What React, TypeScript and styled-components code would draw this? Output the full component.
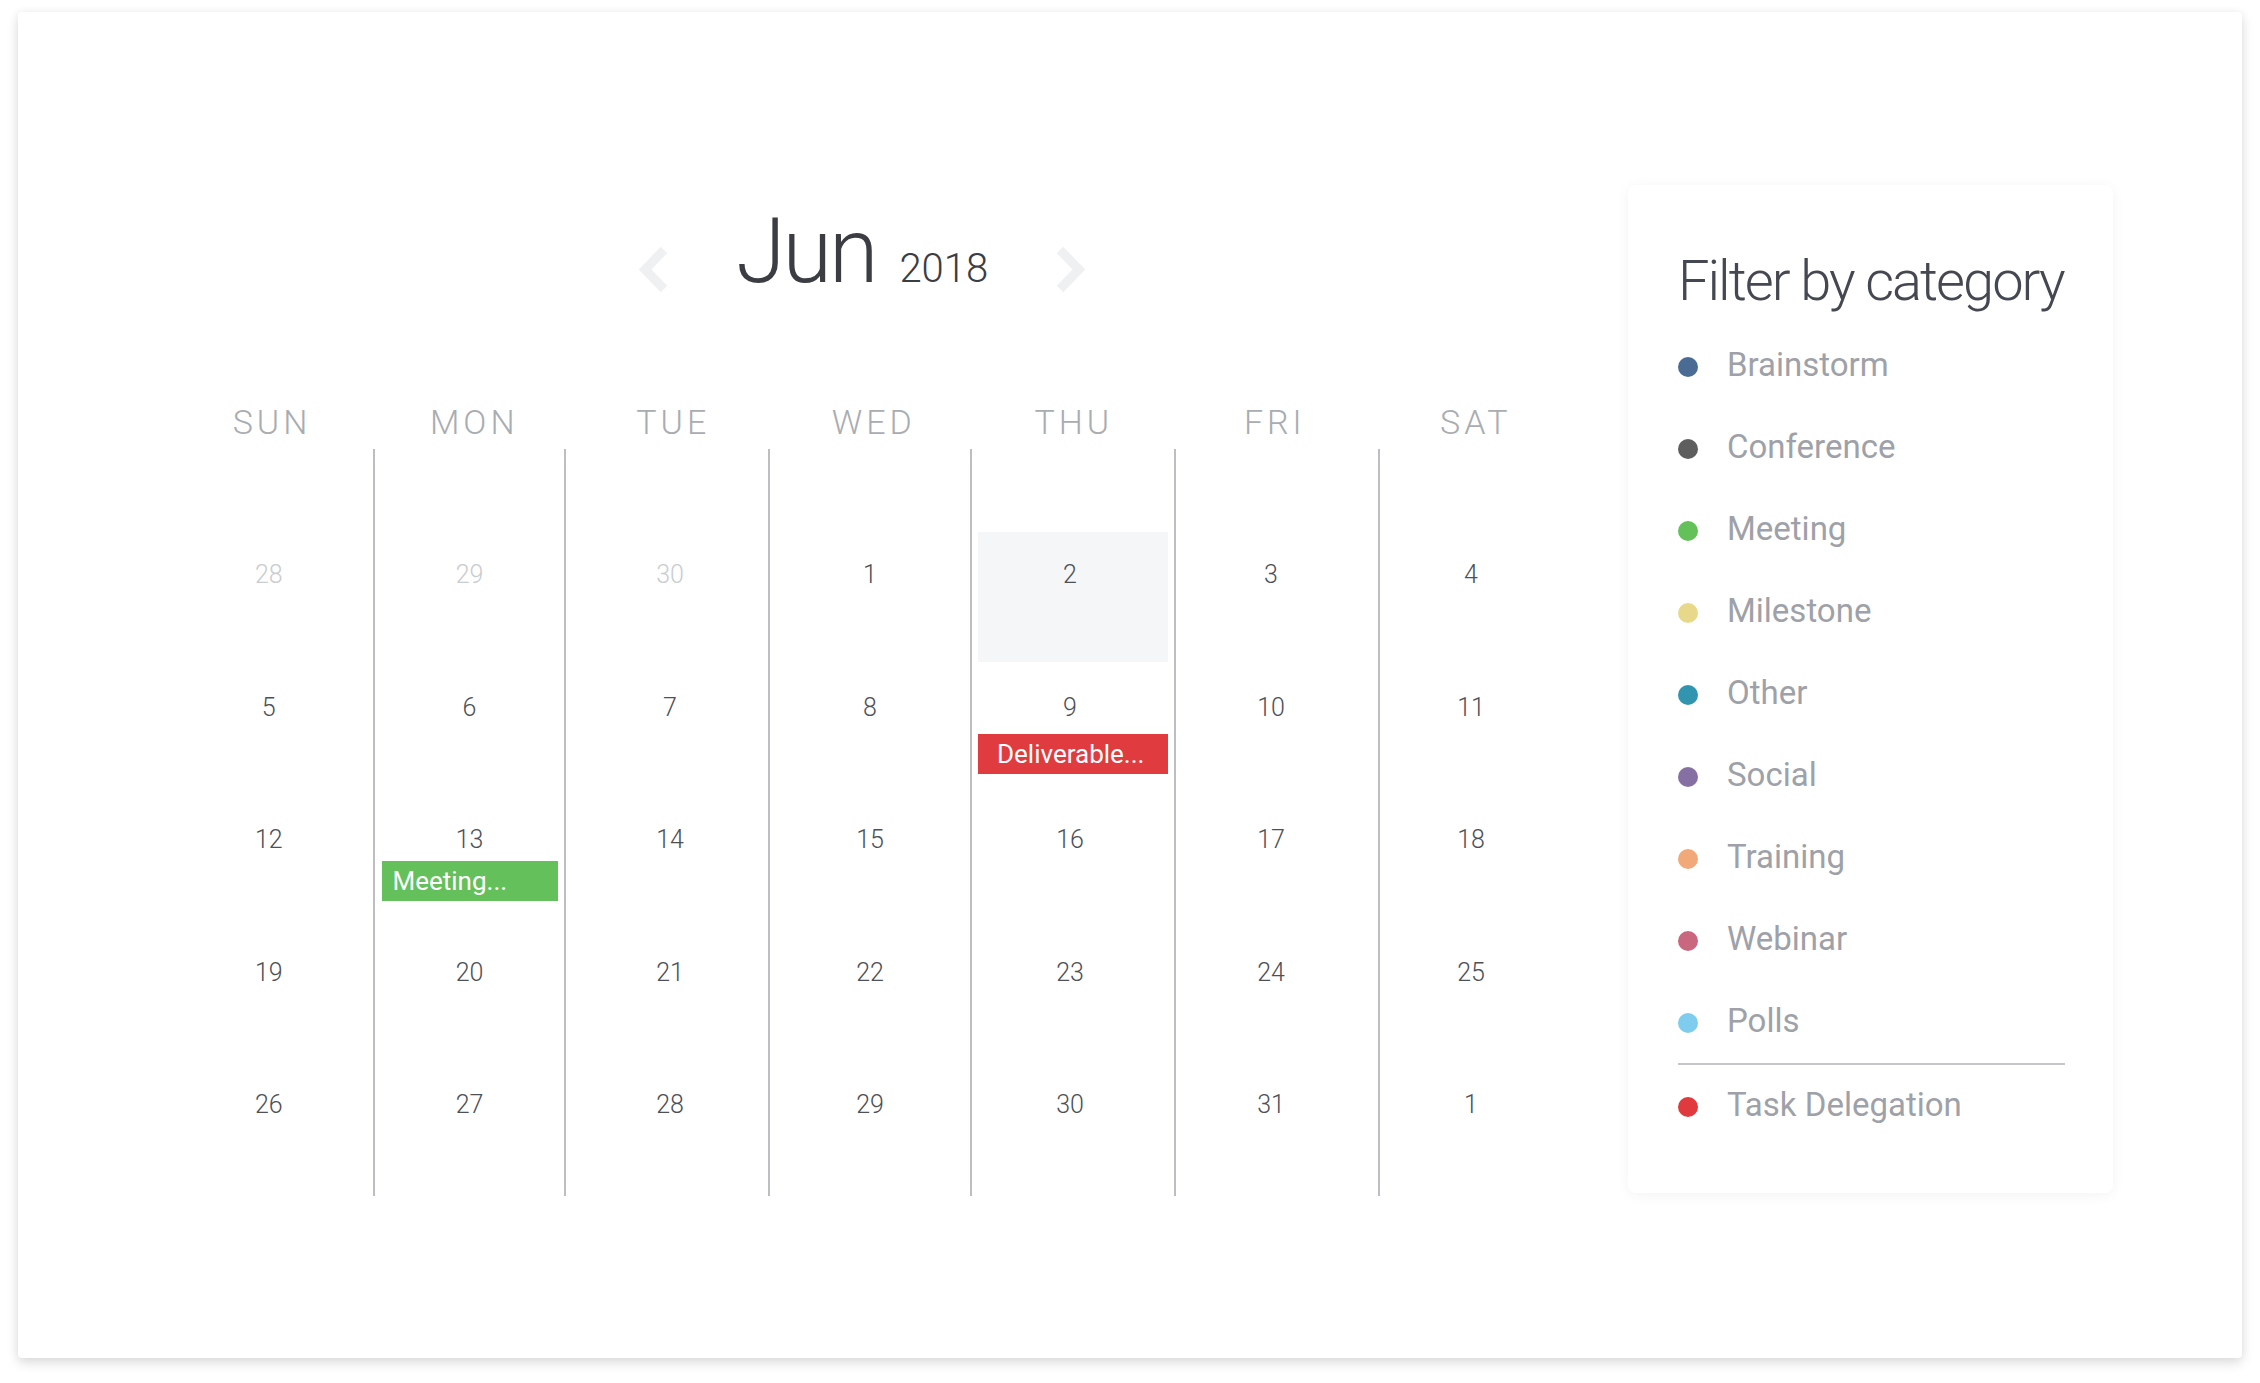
import React from "react";
import styled, { createGlobalStyle } from "styled-components";

const GlobalStyle = createGlobalStyle`
  html, body {
    margin: 0;
    padding: 0;
    background: #ffffff;
  }
  body {
    font-family: Roboto, "Noto Sans", "Liberation Sans", sans-serif;
  }
  #root {
    width: 2260px;
    height: 1383px;
    padding: 12px 18px;
    box-sizing: border-box;
  }
`;

const COLS = "206px 190.5px 204.5px 201.5px 204.5px 203.6px 192.4px";

const nudge = (shift: number) =>
  `padding-left: ${Math.max(0, 2 * shift)}px; padding-right: ${Math.max(0, -2 * shift)}px;`;

const Card = styled.main`
  width: 2224px;
  height: 1346px;
  box-sizing: border-box;
  background: #ffffff;
  border-radius: 4px;
  box-shadow: 0 5px 12px rgba(0, 0, 0, 0.13), 0 0 10px rgba(0, 0, 0, 0.05);
  display: flex;
  align-items: flex-start;
  gap: 58px;
  padding-left: 149px;
`;

const Calendar = styled.section`
  width: 1403px;
  margin-top: 195px;
  display: flex;
  flex-direction: column;
`;

const MonthHeader = styled.header`
  display: flex;
  justify-content: center;
  align-items: flex-end;
  height: 90px;
  gap: 68px;
  padding-right: 13px;
`;

const NavButton = styled.button`
  border: none;
  background: none;
  padding: 0;
  margin-bottom: 4px;
  width: 31px;
  height: 47px;
  display: flex;
  cursor: pointer;
  align-self: flex-end;
`;

const Title = styled.div`
  display: flex;
  align-items: baseline;
  gap: 24px;
  height: 90px;
`;

const MonthName = styled.span`
  font-size: 90px;
  font-weight: 300;
  line-height: 1;
  letter-spacing: -3px;
  color: #3b3d43;
`;

const Year = styled.span`
  font-size: 40px;
  font-weight: 300;
  line-height: 1;
  color: #3b3d43;
`;

const WeekdayRow = styled.div`
  display: grid;
  grid-template-columns: ${COLS};
  margin-top: 108px;
`;

const Weekday = styled.div<{ $shift: number }>`
  text-align: center;
  font-size: 34px;
  font-weight: 300;
  line-height: 34px;
  letter-spacing: 4px;
  text-indent: 4px;
  color: #a9acb1;
  ${(p) => nudge(p.$shift)}
`;

const Body = styled.div`
  display: grid;
  grid-template-columns: ${COLS};
  margin-top: 10px;
`;

const DayColumn = styled.div<{ $first: boolean }>`
  display: flex;
  flex-direction: column;
  padding: 83px 0 1px;
  border-left: ${(p) => (p.$first ? "none" : "2px solid #bcbec2")};
`;

const DayCell = styled.div<{ $today: boolean }>`
  height: 129.6px;
  margin: 0 6px 3px 6.5px;
  padding-top: 30px;
  box-sizing: border-box;
  display: flex;
  flex-direction: column;
  background: ${(p) => (p.$today ? "#f5f6f8" : "transparent")};
`;

const DateNum = styled.span<{ $muted: boolean; $shift: number }>`
  font-size: 25px;
  line-height: 25px;
  font-weight: 300;
  text-align: center;
  color: ${(p) => (p.$muted ? "#c9ccd0" : "#4d5056")};
  ${(p) => nudge(p.$shift)}
`;

const EventTag = styled.div<{ $color: string; $offset: number; $pad: number }>`
  height: 40px;
  line-height: 40px;
  margin-top: ${(p) => p.$offset}px;
  padding-left: ${(p) => p.$pad}px;
  background: ${(p) => p.$color};
  color: #ffffff;
  font-size: 26px;
  font-weight: 400;
  white-space: nowrap;
  overflow: hidden;
`;

const Panel = styled.aside`
  width: 485px;
  margin-top: 173px;
  padding: 68px 48px 48px 50px;
  box-sizing: border-box;
  background: #ffffff;
  border-radius: 8px;
  box-shadow: 0 2px 14px rgba(0, 0, 0, 0.05);
`;

const PanelTitle = styled.h2`
  margin: 0;
  font-size: 56px;
  font-weight: 300;
  line-height: 56px;
  letter-spacing: -2px;
  color: #464851;
  white-space: nowrap;
`;

const Legend = styled.ul`
  margin: 14px 0 0;
  padding: 0;
  list-style: none;
`;

const LegendItem = styled.li`
  display: flex;
  align-items: center;
  height: 82px;
  gap: 29px;
  font-size: 33px;
  line-height: 33px;
  font-weight: 400;
  color: #9ea1a8;
  cursor: pointer;
`;

const Dot = styled.span<{ $color: string }>`
  width: 20px;
  height: 20px;
  margin-top: 6px;
  border-radius: 50%;
  flex-shrink: 0;
  background: ${(p) => p.$color};
`;

const Divider = styled.li`
  height: 2px;
  margin-top: 2px;
  margin-bottom: -2px;
  background: #c4c6ca;
`;

const Chevron = ({ dir }: { dir: "left" | "right" }) => (
  <svg width="31" height="47" viewBox="0 0 31 47" aria-hidden="true">
    <polyline
      points={dir === "left" ? "27,4 8,23.5 27,43" : "4,4 23,23.5 4,43"}
      fill="none"
      stroke="#eef0f2"
      strokeWidth="9"
      strokeLinejoin="miter"
      strokeLinecap="butt"
    />
  </svg>
);

type Day = {
  n: number;
  muted?: boolean;
  today?: boolean;
  event?: { label: string; color: string; offset: number; pad: number };
};

const WEEKS: Day[][] = [
  [
    { n: 28, muted: true },
    { n: 29, muted: true },
    { n: 30, muted: true },
    { n: 1 },
    { n: 2, today: true },
    { n: 3 },
    { n: 4 },
  ],
  [
    { n: 5 },
    { n: 6 },
    { n: 7 },
    { n: 8 },
    { n: 9, event: { label: "Deliverable...", color: "#e03b3e", offset: 14, pad: 19 } },
    { n: 10 },
    { n: 11 },
  ],
  [
    { n: 12 },
    { n: 13, event: { label: "Meeting...", color: "#64c05a", offset: 9, pad: 11 } },
    { n: 14 },
    { n: 15 },
    { n: 16 },
    { n: 17 },
    { n: 18 },
  ],
  [19, 20, 21, 22, 23, 24, 25].map((n) => ({ n })),
  [26, 27, 28, 29, 30, 31, 1].map((n) => ({ n })),
];

const WEEKDAYS = [
  { label: "SUN", head: 0, date: -1.5 },
  { label: "MON", head: 4, date: 0 },
  { label: "TUE", head: 5.5, date: 3 },
  { label: "WED", head: 3, date: 0 },
  { label: "THU", head: 0, date: -3 },
  { label: "FRI", head: -3, date: -6 },
  { label: "SAT", head: 0, date: -4 },
];

const CATEGORIES = [
  { label: "Brainstorm", color: "#4a6b93" },
  { label: "Conference", color: "#5e5e5e" },
  { label: "Meeting", color: "#64c15a" },
  { label: "Milestone", color: "#e8d98a" },
  { label: "Other", color: "#3295b0" },
  { label: "Social", color: "#8670a3" },
  { label: "Training", color: "#f2a97a" },
  { label: "Webinar", color: "#c9677f" },
  { label: "Polls", color: "#7fcdee" },
];

export default function App() {
  return (
    <>
      <GlobalStyle />
      <Card>
        <Calendar>
          <MonthHeader>
            <NavButton aria-label="Previous month">
              <Chevron dir="left" />
            </NavButton>
            <Title>
              <MonthName>Jun</MonthName>
              <Year>2018</Year>
            </Title>
            <NavButton aria-label="Next month">
              <Chevron dir="right" />
            </NavButton>
          </MonthHeader>
          <WeekdayRow>
            {WEEKDAYS.map((d) => (
              <Weekday key={d.label} $shift={d.head}>
                {d.label}
              </Weekday>
            ))}
          </WeekdayRow>
          <Body>
            {WEEKDAYS.map((d, col) => (
              <DayColumn key={d.label} $first={col === 0}>
                {WEEKS.map((week, row) => {
                  const day = week[col];
                  return (
                    <DayCell key={row} $today={!!day.today}>
                      <DateNum $muted={!!day.muted} $shift={d.date}>
                        {day.n}
                      </DateNum>
                      {day.event && (
                        <EventTag
                          $color={day.event.color}
                          $offset={day.event.offset}
                          $pad={day.event.pad}
                        >
                          {day.event.label}
                        </EventTag>
                      )}
                    </DayCell>
                  );
                })}
              </DayColumn>
            ))}
          </Body>
        </Calendar>
        <Panel>
          <PanelTitle>Filter by category</PanelTitle>
          <Legend>
            {CATEGORIES.map((c) => (
              <LegendItem key={c.label}>
                <Dot $color={c.color} />
                {c.label}
              </LegendItem>
            ))}
            <Divider aria-hidden="true" />
            <LegendItem>
              <Dot $color="#e03a3e" />
              Task Delegation
            </LegendItem>
          </Legend>
        </Panel>
      </Card>
    </>
  );
}
